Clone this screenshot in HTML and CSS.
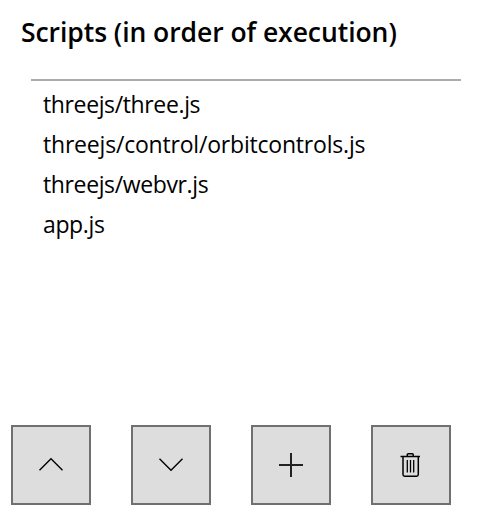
FILE: index.html
```html
<!DOCTYPE html>
<html lang="en">
<head>
<meta charset="utf-8">
<title>Scripts</title>
<link rel="stylesheet" href="styles.css">
</head>
<body>
<main class="panel">
  <h1 class="title">Scripts (in order of execution)</h1>
  <ul class="scripts">
    <li>threejs/three.js</li>
    <li class="wide">threejs/control/orbitcontrols.js</li>
    <li>threejs/webvr.js</li>
    <li>app.js</li>
  </ul>
  <div class="toolbar">
    <button class="tool" aria-label="Move up"><svg viewBox="0 0 76 76"><path d="M26.5 43.3 38 31.8 49.5 43.3"/></svg></button>
    <button class="tool" aria-label="Move down"><svg viewBox="0 0 76 76"><path d="M26.5 31.700 38 43.200 49.500 31.700"/></svg></button>
    <button class="tool" aria-label="Add"><svg class="plus" viewBox="0 0 76 76"><path d="M26 38H50M38 26V50"/></svg></button>
    <button class="tool" aria-label="Delete"><svg class="trash" viewBox="0 0 76 76"><path d="M27.500 29.600H47M34.300 29.500V27.600Q34.300 26.700 35.200 26.700H39.300Q40.200 26.700 40.200 27.600V29.500M30 29.600V47.500Q30 49.200 31.700 49.200H43.600Q45.300 49.200 45.300 47.500V29.600"/><path class="slats" d="M34.300 33V45.500M37.500 33V45.500M40.700 33V45.500"/></svg></button>
  </div>
</main>
</body>
</html>
```
FILE: styles.css
```css
* { box-sizing: border-box; }
body { margin: 0; background: #fff; color: #000; font-family: "Open Sans", "Noto Sans", sans-serif; }
.panel { display: flex; flex-direction: column; width: 479px; height: 530px; padding: 13px 18px 25px 11px; }
.title { margin: 0 0 0 10px; height: 66px; font-size: 26.5px; line-height: 38px; font-weight: 600; white-space: nowrap; letter-spacing: -0.06px; }
.scripts { list-style: none; margin: 0 0 0 20px; padding: 3px 12px; border-top: 2px solid #ababae; font-size: 23px; line-height: 40px; white-space: nowrap; letter-spacing: -0.37px; }
.scripts .wide { letter-spacing: -0.2px; }
.toolbar { display: flex; gap: 40px; margin-top: auto; }
.tool { width: 80px; height: 80px; padding: 0; border: 2px solid #707070; background: #ddd; }
.tool svg { display: block; width: 76px; height: 76px; fill: none; stroke: #000; stroke-width: 1.4; }
.tool .plus { stroke: #222; stroke-width: 2; }
.tool .trash { stroke-width: 1.5; }
.tool .slats { stroke-width: 1.3; }
```
